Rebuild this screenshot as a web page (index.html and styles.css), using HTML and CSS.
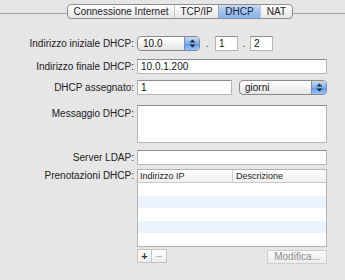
FILE: index.html
```html
<!DOCTYPE html>
<html lang="it">
<head>
    <meta charset="UTF-8">
    <title>DHCP</title>
    <link rel="stylesheet" href="styles.css">
</head>
<body>
    <div class="panel">
        <div class="tab-bar">
            <div class="tabs">
                <span class="tab tab-internet">Connessione Internet</span>
                <span class="tab tab-tcp">TCP/IP</span>
                <span class="tab tab-dhcp selected">DHCP</span>
                <span class="tab tab-nat">NAT</span>
            </div>
        </div>

        <div class="form">
            <div class="row">
                <label>Indirizzo iniziale DHCP:</label>
                <div class="ip-group">
                    <div class="popup popup-ip">
                        <span class="popup-text">10.0</span>
                        <span class="arrows">
                            <svg width="7" height="9" viewBox="0 0 7 9"><path d="M3.5 0.5 L6.5 3.5 L0.5 3.5 Z M3.5 8.5 L6.5 5.5 L0.5 5.5 Z" fill="#1b2a44"/></svg>
                        </span>
                    </div>
                    <span class="dot dot-first">.</span>
                    <input class="text octet" type="text" value="1">
                    <span class="dot">.</span>
                    <input class="text octet" type="text" value="2">
                </div>
            </div>

            <div class="row row-end">
                <label>Indirizzo finale DHCP:</label>
                <input class="text wide" type="text" value="10.0.1.200">
            </div>

            <div class="row row-lease">
                <label>DHCP assegnato:</label>
                <input class="text lease" type="text" value="1">
                <div class="popup popup-unit">
                    <span class="popup-text">giorni</span>
                    <span class="arrows">
                        <svg width="7" height="9" viewBox="0 0 7 9"><path d="M3.5 0.5 L6.5 3.5 L0.5 3.5 Z M3.5 8.5 L6.5 5.5 L0.5 5.5 Z" fill="#1b2a44"/></svg>
                    </span>
                </div>
            </div>

            <div class="row row-top row-message">
                <label class="label-top">Messaggio DHCP:</label>
                <textarea class="text message"></textarea>
            </div>

            <div class="row row-ldap">
                <label>Server LDAP:</label>
                <input class="text wide" type="text" value="">
            </div>

            <div class="row row-top row-table">
                <label class="label-table">Prenotazioni DHCP:</label>
                <div class="table">
                    <div class="table-head">
                        <span class="th th-ip">Indirizzo IP</span>
                        <span class="th th-desc">Descrizione</span>
                    </div>
                    <div class="table-row"></div>
                    <div class="table-row"></div>
                    <div class="table-row"></div>
                    <div class="table-row"></div>
                    <div class="table-row"></div>
                </div>
            </div>

            <div class="row row-buttons">
                <div class="add-remove">
                    <button class="small-btn plus">+</button>
                    <button class="small-btn minus">&minus;</button>
                </div>
                <button class="edit-btn">Modifica...</button>
            </div>
        </div>
    </div>
</body>
</html>
```

FILE: styles.css
```css
body {
    margin: 0;
    background-color: #e6e6e6;
    font-family: 'Liberation Sans', Arial, sans-serif;
    font-size: 10px;
    color: #1a1a1a;
}

.panel {
    width: 345px;
    height: 280px;
}

/* tab strip with the line running behind it */
.tab-bar {
    display: flex;
    height: 15px;
    padding-top: 4px;
    padding-left: 67px;
    background: linear-gradient(#a3a3a3, #a3a3a3) 0 13px / 100% 1px no-repeat;
}

.tabs {
    display: flex;
    height: 15px;
    box-sizing: border-box;
    border: 1px solid #8e8e8e;
    border-radius: 4px;
    background: linear-gradient(#ffffff, #f2f2f2 50%, #e6e6e6);
    overflow: hidden;
}

.tab {
    line-height: 13px;
    text-align: center;
    border-left: 1px solid #c6c6c6;
    color: #222;
}

.tab-internet {
    width: 106px;
    border-left: none;
}

.tab-tcp {
    width: 43px;
}

.tab-dhcp {
    width: 41px;
}

.tab-nat {
    width: 31px;
}

.tab.selected {
    background: linear-gradient(#c7dcf6, #9fc2ee 50%, #8ab4ea);
    border-left-color: #8fa9cc;
    color: #11223a;
}

/* form rows */
.form {
    display: flex;
    flex-direction: column;
    margin-top: 17px;
}

.row {
    display: flex;
    align-items: center;
}

.row label {
    width: 134px;
    padding-right: 3px;
    text-align: right;
    color: #222;
}

.row-top {
    align-items: flex-start;
}

.row-end {
    margin-top: 8px;
}

.row-lease {
    margin-top: 6px;
}

.row-message {
    margin-top: 10px;
}

.row-ldap {
    margin-top: 7px;
}

.row-table {
    margin-top: 4px;
}

.row-buttons {
    margin-top: 2px;
    padding-left: 137px;
    width: 190px;
}

.label-top {
    padding-top: 3px;
}

.label-table {
    padding-top: 1px;
}

.text {
    height: 15px;
    box-sizing: border-box;
    margin: 0;
    padding: 0 3px;
    border: 1px solid #b6b6b6;
    border-top-color: #8c8c8c;
    background: #fff;
    font-family: inherit;
    font-size: 10px;
    line-height: 13px;
    color: #111;
    outline: none;
}

.wide {
    width: 190px;
}

.lease {
    width: 95px;
}

.message {
    width: 190px;
    height: 38px;
    resize: none;
}

.octet {
    width: 23px;
}

.ip-group {
    display: flex;
    align-items: center;
}

.dot {
    width: 12px;
    text-align: center;
    color: #333;
}

.dot-first {
    width: 15px;
}

/* pop-up menus */
.popup {
    display: flex;
    height: 15px;
    box-sizing: border-box;
    border: 1px solid #8a8a8a;
    border-radius: 4px;
    background: linear-gradient(#ffffff, #f3f3f3 50%, #e4e4e4);
    overflow: hidden;
}

.popup-text {
    padding-left: 5px;
    line-height: 13px;
    color: #111;
}

.arrows {
    display: flex;
    align-items: center;
    justify-content: center;
    width: 14px;
    margin-left: auto;
    border-left: 1px solid #6c8fc0;
    background: linear-gradient(#c4dcf7, #7eaeea 50%, #5e98e4 51%, #9cc4f2);
}

.popup-ip {
    width: 63px;
}

.popup-unit {
    width: 88px;
    margin-left: 7px;
}

/* reservations table */
.table {
    width: 190px;
    box-sizing: border-box;
    border: 1px solid #b3b3b3;
    background: #fff;
}

.table-head {
    display: flex;
    height: 12px;
    border-bottom: 1px solid #c9c9c9;
    background: linear-gradient(#ffffff, #efefef);
}

.th {
    line-height: 12px;
    font-size: 9px;
    color: #222;
}

.th-ip {
    width: 92px;
    padding-left: 2px;
    border-right: 1px solid #d0d0d0;
}

.th-desc {
    padding-left: 3px;
}

.table-row {
    height: 12.5px;
}

.table-row:nth-child(odd) {
    background: #edf3fe;
}

/* buttons under the table */
.row-buttons {
    justify-content: space-between;
}

.add-remove {
    display: flex;
}

.small-btn {
    width: 15px;
    height: 14px;
    margin: 0;
    padding: 0;
    border: 1px solid #c4c4c4;
    background: linear-gradient(#ffffff, #ececec);
    font-family: inherit;
    font-size: 11px;
    line-height: 11px;
    font-weight: bold;
    color: #333;
}

.minus {
    border-left: none;
    font-weight: normal;
    color: #aaa;
}

.edit-btn {
    width: 60px;
    height: 14px;
    margin: 1px 0 0 0;
    padding: 0;
    border: 1px solid #cfcfcf;
    background: linear-gradient(#fafafa, #ebebeb);
    font-family: inherit;
    font-size: 10px;
    color: #8c8c8c;
}
```
